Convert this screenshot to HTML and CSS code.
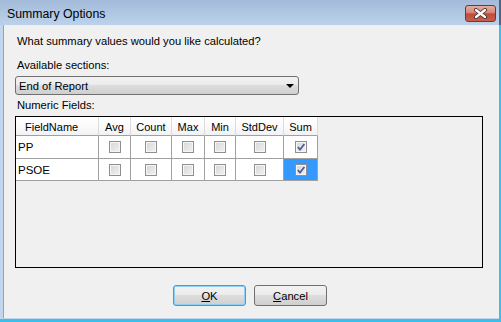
FILE: index.html
```html
<!DOCTYPE html>
<html>
<head>
<meta charset="utf-8">
<link rel="stylesheet" href="styles.css">
</head>
<body>
<div class="window">
  <div class="titlebar">
    <span class="title">Summary Options</span>
    <div class="close">
      <svg width="15" height="11" viewBox="0 0 15 11">
        <path d="M3 2 L12 9 M12 2 L3 9" stroke="#3b2a2a" stroke-width="4" stroke-linecap="round"/>
        <path d="M3 2 L12 9 M12 2 L3 9" stroke="#ffffff" stroke-width="2.4" stroke-linecap="round"/>
      </svg>
    </div>
  </div>
  <div class="frame">
    <div class="client">
      <div class="text question">What summary values would you like calculated?</div>
      <div class="text label-sections">Available sections:</div>
      <div class="combo"><span class="combo-text">End of Report</span><span class="arrow"></span></div>
      <div class="text label-fields">Numeric Fields:</div>
      <div class="grid-box">
        <div class="grid">
          <div class="hcell hcell-left">FieldName</div>
          <div class="hcell">Avg</div>
          <div class="hcell">Count</div>
          <div class="hcell">Max</div>
          <div class="hcell">Min</div>
          <div class="hcell">StdDev</div>
          <div class="hcell">Sum</div>

          <div class="cell cell-text">PP</div>
          <div class="cell"><span class="cb"></span></div>
          <div class="cell"><span class="cb"></span></div>
          <div class="cell"><span class="cb"></span></div>
          <div class="cell"><span class="cb"></span></div>
          <div class="cell"><span class="cb"></span></div>
          <div class="cell"><span class="cb"><svg width="10" height="10" viewBox="0 0 10 10"><path d="M1.8 5 L4 7.6 L8.4 2" fill="none" stroke="#4a5c95" stroke-width="1.7"/></svg></span></div>

          <div class="cell cell-text">PSOE</div>
          <div class="cell"><span class="cb"></span></div>
          <div class="cell"><span class="cb"></span></div>
          <div class="cell"><span class="cb"></span></div>
          <div class="cell"><span class="cb"></span></div>
          <div class="cell"><span class="cb"></span></div>
          <div class="cell cell-selected"><span class="cb"><svg width="10" height="10" viewBox="0 0 10 10"><path d="M1.8 5 L4 7.6 L8.4 2" fill="none" stroke="#4a5c95" stroke-width="1.7"/></svg></span></div>
        </div>
      </div>
      <div class="buttons">
        <div class="btn btn-default"><span class="ul">O</span>K</div>
        <div class="btn"><span class="ul">C</span>ancel</div>
      </div>
    </div>
  </div>
</div>
</body>
</html>
```

FILE: styles.css
```css
* { box-sizing: border-box; }

body {
  margin: 0;
  font-family: "Liberation Sans", Arial, sans-serif;
  font-size: 11px;
  color: #000;
}

.window {
  width: 501px;
  height: 322px;
  display: flex;
  flex-direction: column;
  background: #c2d6ee;
  overflow: hidden;
}

.titlebar {
  height: 25px;
  flex: none;
  display: flex;
  align-items: flex-start;
  padding-left: 7px;
  background: linear-gradient(#a3bbd9, #bcd2eb);
  border-right: 2px solid #4a6585;
}

.title {
  font-size: 12.3px;
  line-height: 14px;
  margin-top: 7px;
  color: #000;
}

.close {
  margin-left: auto;
  margin-right: 3px;
  margin-top: 5px;
  width: 31px;
  height: 17px;
  border: 1px solid #6a3a36;
  border-radius: 3px;
  background: linear-gradient(#e6ada1 0%, #d68676 45%, #c24b39 52%, #c6604d 100%);
  display: flex;
  align-items: center;
  justify-content: center;
}

.frame {
  flex: 1;
  display: flex;
  padding-left: 3px;
  padding-bottom: 1px;
  border-right: 2px solid #37c0ec;
  border-bottom: 3px solid #37c0ec;
}

.client {
  flex: 1;
  background: #f0f0f0;
  border-left: 1px solid #8aa5c6;
  padding-left: 11px;
  display: flex;
  flex-direction: column;
  align-items: flex-start;
}

.text {
  line-height: 13px;
  padding-left: 2px;
  font-size: 11.2px;
}

.question { margin-top: 10px; }
.label-sections { margin-top: 11px; }
.label-fields { margin-top: 4px; }

.combo {
  margin-top: 4px;
  width: 284px;
  height: 19px;
  border: 1px solid #707070;
  border-radius: 3px;
  background: linear-gradient(#f2f2f2 0%, #ebebeb 50%, #dddddd 50%, #cfcfcf 100%);
  display: flex;
  align-items: center;
  padding-left: 3px;
  padding-right: 4px;
}

.combo-text { flex: 1; font-size: 11.2px; }

.arrow {
  width: 0;
  height: 0;
  border-left: 4px solid transparent;
  border-right: 4px solid transparent;
  border-top: 4px solid #000;
}

.grid-box {
  margin-top: 4px;
  width: 468px;
  height: 152px;
  border: 1px solid #000;
  background: #f0f0f0;
}

.grid {
  display: grid;
  grid-template-columns: 83px 32px 41px 33px 31px 48px 34px;
  grid-template-rows: 19px 23px 22px;
  width: max-content;
}

.hcell {
  background: linear-gradient(#ffffff 0%, #fbfbfc 50%, #f1f2f4 100%);
  border-right: 1px solid #dcdcdc;
  border-bottom: 1px solid #a0a0a0;
  display: flex;
  align-items: center;
  justify-content: center;
  padding-top: 1px;
}

.hcell-left {
  justify-content: flex-start;
  padding-left: 9px;
}

.cell {
  background: #fff;
  border-right: 1px solid #a0a0a0;
  border-bottom: 1px solid #a0a0a0;
  display: flex;
  align-items: center;
  justify-content: center;
}

.cell-text {
  justify-content: flex-start;
  padding-left: 2px;
  font-size: 11.5px;
}

.cell-selected { background: #3399ff; }

.cb {
  width: 12px;
  height: 12px;
  border: 1px solid #8f8f8f;
  background: linear-gradient(135deg, #d6d6d6, #f2f2f2);
  box-shadow: inset 0 0 0 1px #f6f6f6;
  display: flex;
  align-items: center;
  justify-content: center;
}

.buttons {
  margin-top: 17px;
  padding-left: 158px;
  display: flex;
  gap: 8px;
}

.btn {
  width: 73px;
  height: 21px;
  border: 1px solid #707070;
  border-radius: 3px;
  background: linear-gradient(#f2f2f2 0%, #ebebeb 50%, #dddddd 50%, #cfcfcf 100%);
  display: flex;
  align-items: center;
  justify-content: center;
  font-size: 11.2px;
}

.btn-default {
  border-color: #3c9de0;
  box-shadow: inset 0 0 0 1px #8fd0f3;
}

.ul { text-decoration: underline; }
```
